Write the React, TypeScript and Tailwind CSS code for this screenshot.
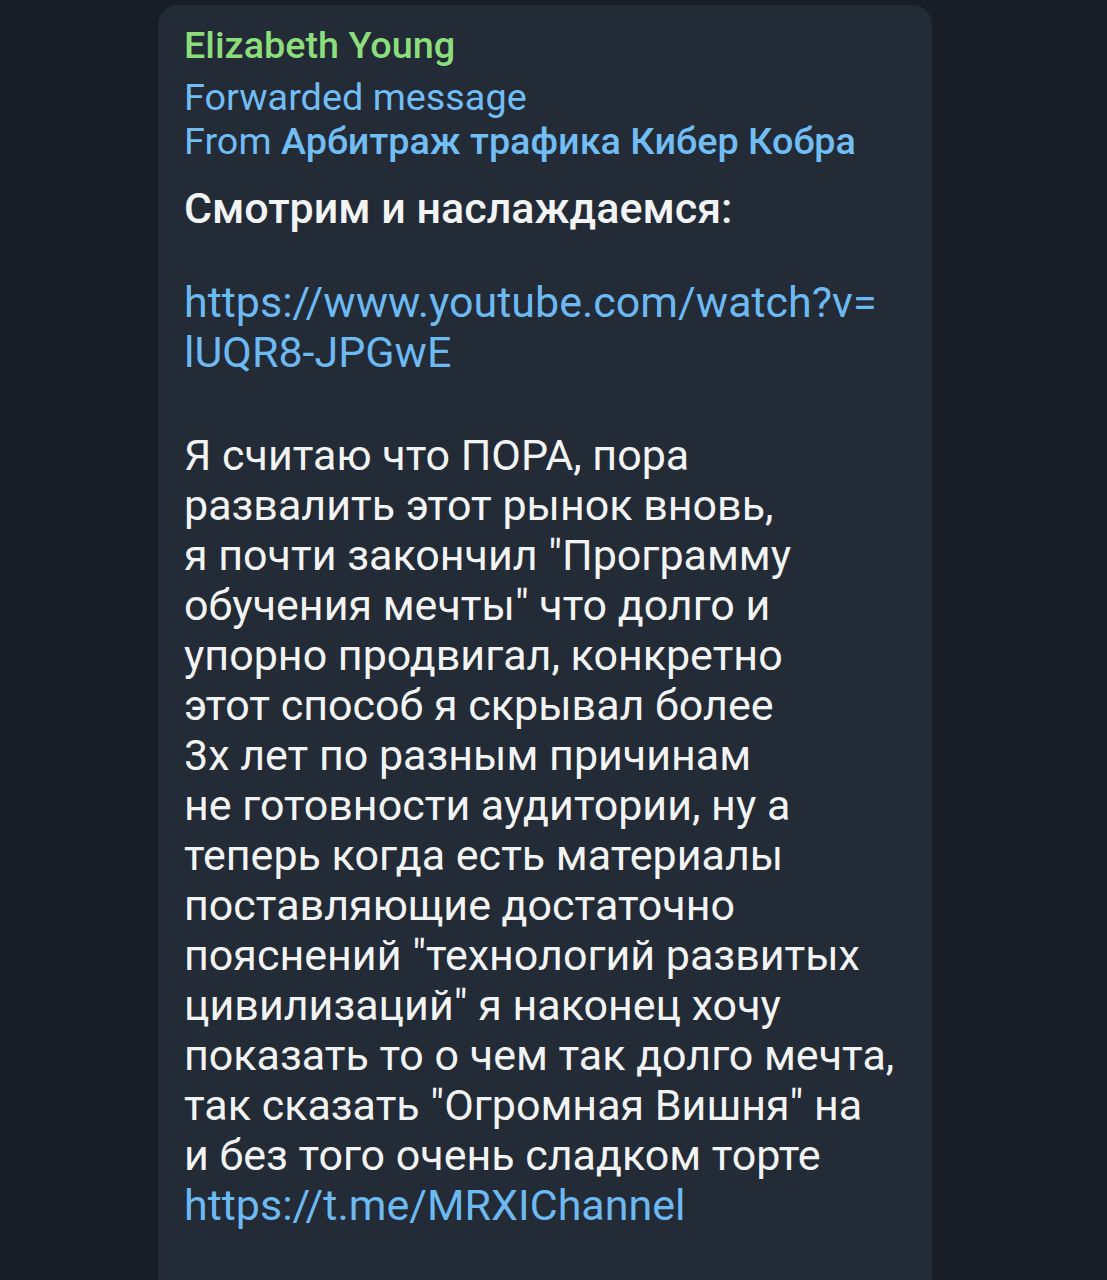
import React from 'react';

const bodyLines = [
  'Я считаю что ПОРА, пора',
  'развалить этот рынок вновь,',
  'я почти закончил "Программу',
  'обучения мечты" что долго и',
  'упорно продвигал, конкретно',
  'этот способ я скрывал более',
  '3х лет по разным причинам',
  'не готовности аудитории, ну а',
  'теперь когда есть материалы',
  'поставляющие достаточно',
  'пояснений "технологий развитых',
  'цивилизаций" я наконец хочу',
  'показать то о чем так долго мечта,',
  'так сказать "Огромная Вишня" на',
  'и без того очень сладком торте',
];

const App = () => {
  return (
    <div
      className="w-[1107px] h-[1280px] overflow-hidden bg-[#191e26] pt-[5px]"
      style={{ fontFamily: 'Roboto, "Noto Sans", sans-serif' }}
    >
      <div className="ml-[158px] w-[774px] h-[1400px] rounded-[20px] bg-[#232b36] pl-[26px] pt-[15px]">
        {/* Header */}
        <div className="text-[37.8px] leading-[50px] font-medium text-[#8ddd7c]">Elizabeth Young</div>
        <div className="mt-[5px] text-[37.8px] leading-[44px] text-[#71bdf4]">Forwarded message</div>
        <div className="text-[37.8px] leading-[44px] text-[#71bdf4]">
          From <span className="font-medium">Арбитраж трафика Кибер Кобра</span>
        </div>

        {/* Message */}
        <div className="mt-[20px] text-[43px] leading-[50px] text-[#f3f4f5]">
          <div className="font-medium">Смотрим и наслаждаемся:</div>
          <div className="h-[44px]" />
          <div className="text-[#6db9f1]">https://www.youtube.com/watch?v=</div>
          <div className="text-[#6db9f1]">lUQR8-JPGwE</div>
          <div className="h-[53px]" />
          {bodyLines.map((l) => (
            <div key={l}>{l}</div>
          ))}
          <div className="text-[#6db9f1]">https://t.me/MRXIChannel</div>
        </div>
      </div>
    </div>
  );
};

export default App;
